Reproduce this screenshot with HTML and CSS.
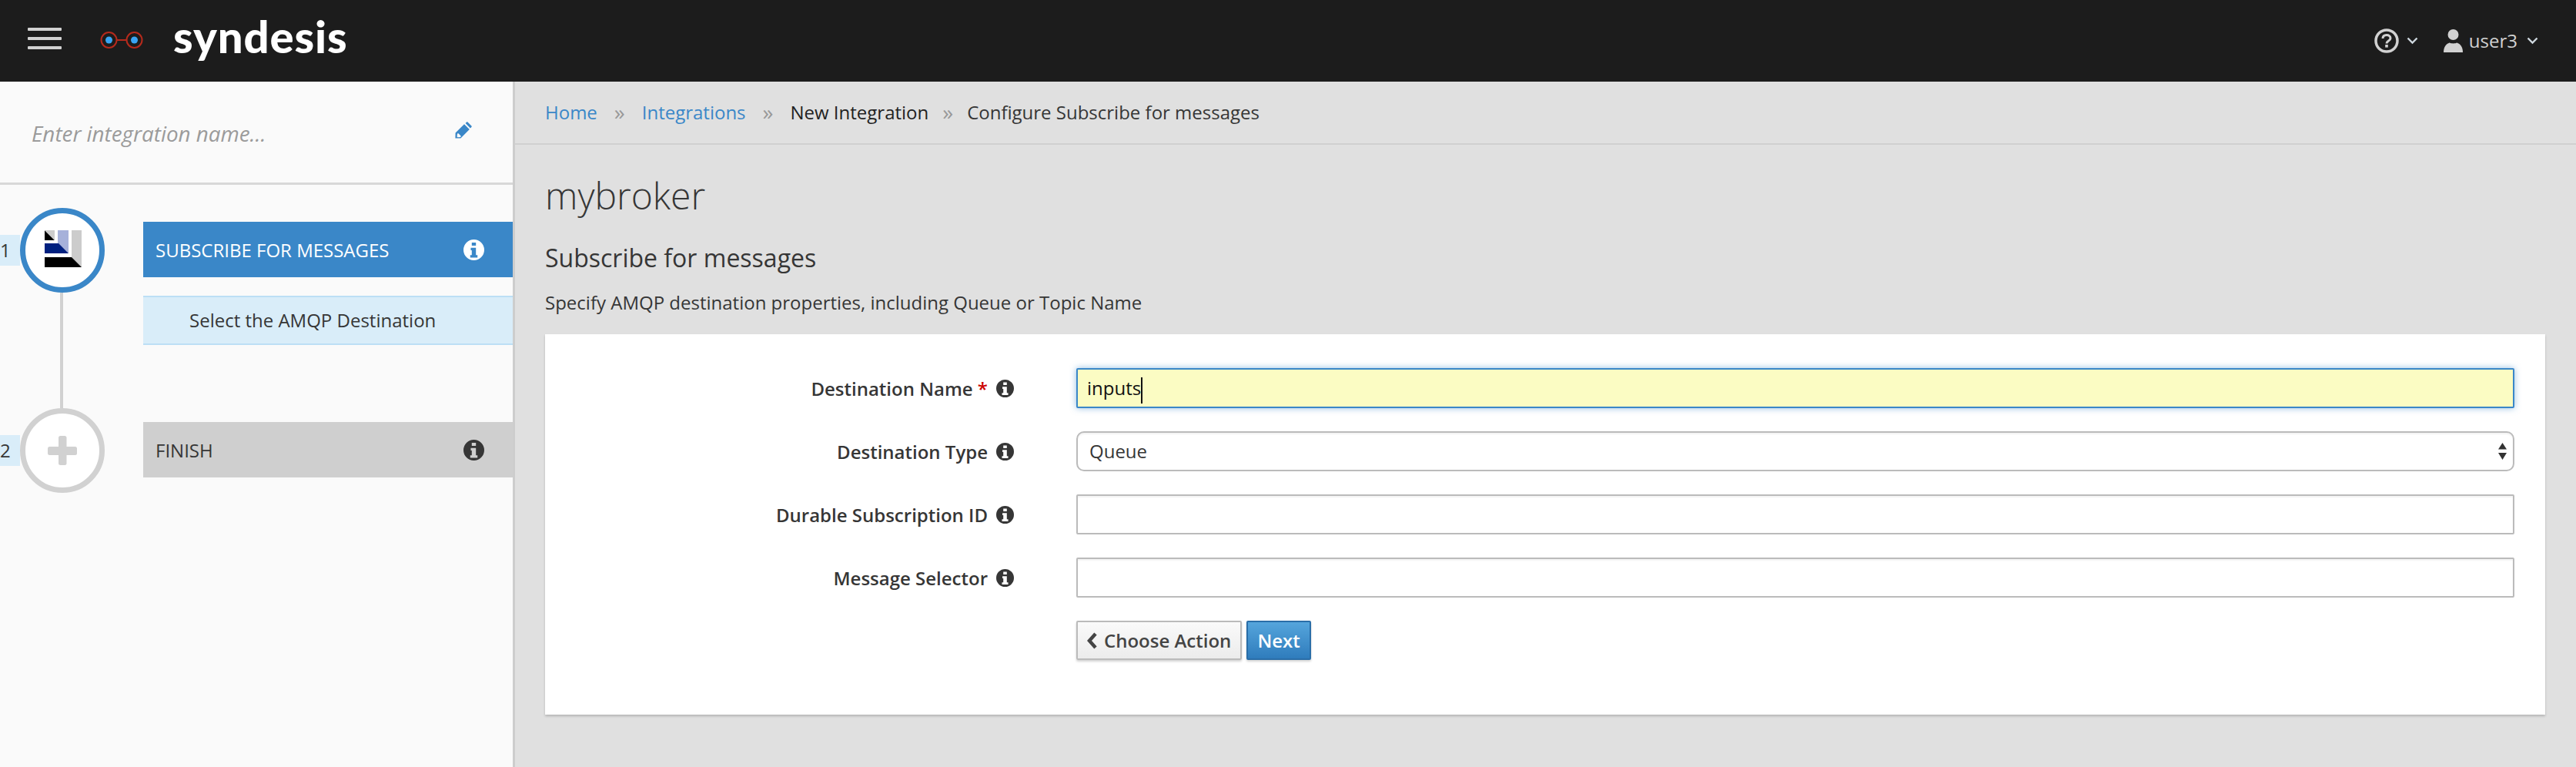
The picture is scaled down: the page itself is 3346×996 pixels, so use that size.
FILE: index.html
```html
<!DOCTYPE html>
<html lang="en">
<head>
  <meta charset="UTF-8">
  <title>Syndesis - Configure Subscribe for messages</title>
  <link rel="stylesheet" href="styles.css">
</head>
<body>
<svg class="sprites" width="0" height="0">
  <symbol id="info" viewBox="0 0 24 24">
    <path fill-rule="evenodd" d="M12 0a12 12 0 1 0 0 24a12 12 0 1 0 0-24zM9.600 3.600h4.800v3.600H9.600zM8.400 9.600h6v8.400h1.800v2.900H7.800V18h1.800v-5.500H8.400z"/>
  </symbol>
</svg>

<header class="topbar">
  <button class="hamburger" aria-label="Menu"><span></span><span></span><span></span></button>
  <svg class="logo-mark" width="56" height="24" viewBox="0 0 56 24">
    <circle cx="11.500" cy="12" r="10" fill="none" stroke="#b52a1c" stroke-width="2"/>
    <circle cx="44.500" cy="12" r="10" fill="none" stroke="#b52a1c" stroke-width="2"/>
    <path d="M21.500 12h13" stroke="#b52a1c" stroke-width="2"/>
    <circle cx="11.500" cy="12" r="4.500" fill="#39a5f4"/>
    <circle cx="44.500" cy="12" r="4.500" fill="#39a5f4"/>
  </svg>
  <span class="logo-text">syndesis</span>

  <nav class="topbar-right">
    <svg class="help-icon" width="32" height="32" viewBox="0 0 32 32">
      <circle cx="16" cy="16" r="14" fill="none" stroke="#d1d1d1" stroke-width="3.500"/>
      <path d="M11 13c0-3 2.200-4.500 5-4.500s5 1.600 5 4.200c0 3.400-5 3.400-5 6.800" fill="none" stroke="#d1d1d1" stroke-width="3"/>
      <rect x="14.200" y="21" width="3.600" height="3.600" fill="#d1d1d1"/>
    </svg>
    <svg class="chev help-chev" width="15" height="10" viewBox="0 0 15 10"><path d="M1.500 1.500l6 6l6-6" fill="none" stroke="#cfd8df" stroke-width="2.400"/></svg>
    <svg class="user-icon" width="25" height="30" viewBox="0 0 25 30">
      <circle cx="12.500" cy="7" r="7" fill="#d1d1d1"/>
      <path d="M0 30c0-4 1-8 4-10.500c2-1.500 4-2 4-2c1.500 1.200 7.500 1.200 9 0c0 0 2 .5 4 2c3 2.500 4 6.500 4 10.500z" fill="#d1d1d1"/>
    </svg>
    <span class="username">user3</span>
    <svg class="chev" width="15" height="10" viewBox="0 0 15 10"><path d="M1.500 1.500l6 6l6-6" fill="none" stroke="#cfd8df" stroke-width="2.400"/></svg>
  </nav>
</header>

<div class="layout">
  <aside class="sidebar">
    <div class="name-box">
      <span class="name-placeholder">Enter integration name...</span>
      <svg class="pencil" width="22" height="22" viewBox="0 0 22 22">
        <path fill="#3a87c8" d="M16.500.6l4.900 4.900a1 1 0 0 1 0 1.400l-1.500 1.500l-6.300-6.300l1.500-1.500a1 1 0 0 1 1.400 0zM12 3.200l6.800 6.800L7.400 21.400L.4 21.600l.2-7zM3 15.500l-.4 3.900l.9.900l3.900-.4l.2-1.500l-3.100-3.100z" fill-rule="evenodd"/>
      </svg>
    </div>

    <div class="steps">
      <div class="step step-first">
        <div class="step-marker">
          <div class="marker-row">
            <span class="step-num">1</span>
            <span class="step-circle active">
              <svg class="step-icon" width="48" height="48" viewBox="0 0 48 48">
                <path fill="#000" d="M0 0L13 13H0z"/>
                <path fill="#ccc" d="M0 0H13V13z"/>
                <path fill="#a6b1da" d="M17 0H31V30L17 17z"/>
                <path fill="#00207f" d="M0 17H18L31 30H0z"/>
                <path fill="#ccc" d="M35 0H48V48L35 35z"/>
                <path fill="#000" d="M0 35H35L48 48H0z"/>
              </svg>
            </span>
          </div>
          <div class="step-line"></div>
        </div>
        <div class="step-body">
          <div class="step-bar bar-active">
            <span>SUBSCRIBE FOR MESSAGES</span>
            <svg class="bar-info" width="27" height="27"><use href="#info"/></svg>
          </div>
          <div class="step-sub">Select the AMQP Destination</div>
        </div>
      </div>

      <div class="step">
        <div class="step-marker">
          <div class="marker-row">
            <span class="step-num">2</span>
            <span class="step-circle">
              <svg width="38" height="38" viewBox="0 0 38 38">
                <rect x="14" y="0" width="10.500" height="38" rx="2.500" fill="#d1d1d1"/>
                <rect x="0" y="14" width="38" height="11" rx="2.500" fill="#d1d1d1"/>
              </svg>
            </span>
          </div>
        </div>
        <div class="step-body">
          <div class="step-bar bar-idle">
            <span>FINISH</span>
            <svg class="bar-info" width="27" height="27"><use href="#info"/></svg>
          </div>
        </div>
      </div>
    </div>
  </aside>

  <main class="content">
    <ol class="breadcrumb">
      <li><a href="#">Home</a></li>
      <li class="sep">»</li>
      <li><a href="#">Integrations</a></li>
      <li class="sep">»</li>
      <li class="crumb-dark">New Integration</li>
      <li class="sep">»</li>
      <li>Configure Subscribe for messages</li>
    </ol>

    <h1>mybroker</h1>
    <h2>Subscribe for messages</h2>
    <p class="lead">Specify AMQP destination properties, including Queue or Topic Name</p>

    <form class="card">
      <div class="form-row">
        <label>Destination Name <span class="req">*</span><svg class="label-info" width="23" height="23"><use href="#info"/></svg></label>
        <div class="field focused">inputs<span class="caret"></span></div>
      </div>
      <div class="form-row">
        <label>Destination Type<svg class="label-info" width="23" height="23"><use href="#info"/></svg></label>
        <div class="select-wrap">
          <select class="field field-select"><option>Queue</option></select>
          <svg class="select-arrows" width="11" height="22" viewBox="0 0 11 22">
            <path d="M5.500 0L11 8.500H0zM0 13h11l-5.500 9z" fill="#333"/>
          </svg>
        </div>
      </div>
      <div class="form-row">
        <label>Durable Subscription ID<svg class="label-info" width="23" height="23"><use href="#info"/></svg></label>
        <input class="field" type="text">
      </div>
      <div class="form-row">
        <label>Message Selector<svg class="label-info" width="23" height="23"><use href="#info"/></svg></label>
        <input class="field" type="text">
      </div>
      <div class="form-row actions-row">
        <span></span>
        <div class="actions">
          <button type="button" class="btn btn-default">
            <svg width="14" height="22" viewBox="0 0 14 22"><path d="M11 2L3 11l8 9" fill="none" stroke="#444" stroke-width="4.500"/></svg>
            Choose Action
          </button>
          <button type="button" class="btn btn-primary">Next</button>
        </div>
      </div>
    </form>
  </main>
</div>
</body>
</html>
```

FILE: styles.css
```css
:root {
  --blue: #3a87c8;
  --text: #363636;
  --font: "Open Sans", "Noto Sans", sans-serif;
}

* {
  box-sizing: border-box;
}

body {
  margin: 0;
  background: #e0e0e0;
  color: var(--text);
  font-family: var(--font);
  font-size: 24px;
}

.sprites {
  display: none;
}

/* top bar */
.topbar {
  display: flex;
  align-items: center;
  height: 106px;
  padding-left: 36px;
  background: #1c1c1c;
}

.hamburger {
  display: flex;
  flex-direction: column;
  gap: 8px;
  width: 44px;
  padding: 0;
  margin-bottom: 6px;
  background: none;
  border: none;
}

.hamburger span {
  display: block;
  height: 4px;
  background: #d1d1d1;
  border-radius: 1px;
}

.logo-mark {
  margin-left: 50px;
  margin-bottom: 2px;
}

.logo-text {
  margin-left: 39px;
  margin-bottom: 12px;
  color: #fff;
  font-family: Lato, sans-serif;
  font-size: 58px;
  font-weight: 900;
  letter-spacing: 0.9px;
  line-height: 1;
}

.topbar-right {
  display: flex;
  align-items: center;
  margin-left: auto;
  padding-right: 49px;
  color: #d1d1d1;
}

.help-chev {
  margin-left: 10px;
  margin-right: 33px;
}

.username {
  margin-left: 8px;
  margin-right: 12px;
  line-height: 1;
}

/* sidebar */
.layout {
  display: flex;
  min-height: 890px;
}

.sidebar {
  flex: none;
  width: 669px;
  background: #fafafa;
  border-right: 3px solid #cdcdcd;
}

.name-box {
  display: flex;
  align-items: center;
  justify-content: space-between;
  height: 134px;
  padding: 2px 53px 0 41px;
  border-bottom: 3px solid #d8d8d8;
}

.name-placeholder {
  color: #9b9b9b;
  font-size: 27.8px;
  font-style: italic;
}

.pencil {
  margin-bottom: 8px;
}

.steps {
  padding-top: 30px;
}

.step {
  display: flex;
}

.step-first {
  height: 260px;
}

.step-marker {
  flex: none;
  width: 136px;
}

.marker-row {
  display: flex;
  align-items: center;
}

.step-num {
  flex: none;
  width: 26px;
  height: 40px;
  background: #d9edf9;
  line-height: 40px;
}

.step-circle {
  display: flex;
  flex: none;
  align-items: center;
  justify-content: center;
  width: 110px;
  height: 110px;
  background: #fff;
  border: 7px solid #d1d1d1;
  border-radius: 50%;
}

.step-circle.active {
  border-color: var(--blue);
}

.step-icon {
  margin: 0 0 5px 2px;
}

.step-line {
  width: 4px;
  height: 150px;
  margin-left: 78px;
  background: #d1d1d1;
}

.step-body {
  flex: 1;
  margin-left: 50px;
  padding-top: 18px;
}

.step-bar {
  display: flex;
  align-items: center;
  justify-content: space-between;
  height: 72px;
  padding: 0 37px 0 16px;
}

.bar-active {
  background: var(--blue);
  color: #fff;
  fill: #fff;
}

.bar-idle {
  background: #cfcfcf;
  fill: #363636;
}

.step-sub {
  height: 64px;
  margin-top: 24px;
  padding-left: 60px;
  background: #d9edf9;
  border-top: 2px solid #bcdff5;
  border-bottom: 2px solid #bcdff5;
  line-height: 60px;
}

/* main column */
.content {
  flex: 1;
  min-width: 0;
  padding: 0 40px 0 39px;
}

.breadcrumb {
  display: flex;
  align-items: center;
  height: 82px;
  margin: 0 -40px 0 -39px;
  padding: 0 0 2px 39px;
  list-style: none;
  border-bottom: 2px solid #d0d0d0;
}

.breadcrumb a {
  color: var(--blue);
  text-decoration: none;
}

.sep {
  margin: 0 22px;
  color: #999;
  font-size: 28px;
  line-height: 1;
}

.crumb-dark {
  color: #222;
}

.crumb-dark + .sep {
  margin: 0 18px;
}

h1 {
  margin: 33px 0 0;
  font-size: 48px;
  font-weight: 300;
  line-height: 66px;
}

h2 {
  margin: 26px 0 0;
  font-size: 32px;
  font-weight: 400;
  line-height: 44px;
}

.lead {
  margin: 20px 0 0;
  line-height: 32px;
}

.card {
  height: 494px;
  margin-top: 25px;
  padding: 44px 40px 0 0;
  background: #fff;
  box-shadow: 0 2px 3px rgba(0, 0, 0, 0.2);
}

.form-row {
  display: grid;
  grid-template-columns: 609px 1fr;
  column-gap: 81px;
  align-items: center;
  margin-bottom: 30px;
}

.form-row label {
  display: flex;
  align-items: center;
  justify-content: flex-end;
  font-weight: 600;
  white-space: pre;
}

.req {
  color: #c00;
}

.label-info {
  margin-left: 11px;
  fill: #363636;
}

.field {
  display: block;
  width: 100%;
  height: 52px;
  padding: 0 12px;
  color: var(--text);
  font-family: var(--font);
  font-size: 24px;
  line-height: 48px;
  background: #fff;
  border: 2px solid #bbb;
  border-radius: 2px;
  box-shadow: inset 0 2px 2px rgba(0, 0, 0, 0.05);
}

.field.focused {
  color: #111;
  background: #fbfcc3;
  border-color: var(--blue);
  box-shadow: 0 0 8px rgba(58, 135, 200, 0.55);
}

.caret {
  display: inline-block;
  width: 2px;
  height: 34px;
  background: #111;
  vertical-align: middle;
}

.select-wrap {
  position: relative;
}

.field-select {
  appearance: none;
  border-radius: 10px;
  padding-left: 15px;
}

.select-arrows {
  position: absolute;
  top: 15px;
  right: 10px;
}

.actions-row {
  margin-top: 1px;
}

.actions {
  display: flex;
  gap: 6px;
}

.btn {
  display: flex;
  align-items: center;
  height: 51px;
  padding: 0 12px;
  font-family: var(--font);
  font-size: 24px;
  font-weight: 600;
  border: 2px solid;
  border-radius: 2px;
  box-shadow: 0 2px 3px rgba(0, 0, 0, 0.18);
}

.btn-default {
  gap: 8px;
  color: #444;
  background: linear-gradient(#fafafa, #ececec);
  border-color: #bbb;
}

.btn-primary {
  color: #fff;
  background: linear-gradient(#55a5dc, #2f7cbc);
  border-color: #2a6ea8;
}
```
